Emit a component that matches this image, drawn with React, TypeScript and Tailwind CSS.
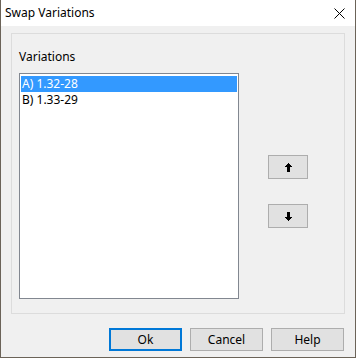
import React from "react";

const font = { fontFamily: '"Noto Sans", "Open Sans", sans-serif' };

function UpArrow() {
  return (
    <svg width="7" height="9" viewBox="0 0 7 9" shapeRendering="crispEdges">
      <path d="M3 0h1v1h1v1h1v1h1v1H5v5H2V4H0V3h1V2h1V1h1z" fill="#000" />
    </svg>
  );
}
function DownArrow() {
  return (
    <svg width="7" height="9" viewBox="0 0 7 9" shapeRendering="crispEdges">
      <path d="M2 0h3v5h2v1H6v1H5v1H4v1H3V8H2V7H1V6H0V5h2z" fill="#000" />
    </svg>
  );
}

export default function App() {
  return (
    <div
      className="w-[356px] h-[358px] flex flex-col bg-[#f0f0f0] border-l border-r border-b border-[#6b6358] text-[12px] text-black"
      style={font}
    >
      <div className="h-[26px] bg-white flex items-center justify-between pl-[4px] pr-[10px] shrink-0">
        <span className="leading-[16px]">Swap Variations</span>
        <svg width="11" height="11" viewBox="0 0 11 11">
          <path d="M0.5 0.5L10.5 10.5M10.5 0.5L0.5 10.5" stroke="#000" strokeWidth="1" />
        </svg>
      </div>
      <div className="flex flex-col pl-[10px] pr-[10px] pt-[7px]">
        <div className="h-[281px] border border-[#dcdcdc] flex flex-col pl-[7px] pt-[15px]">
          <div className="leading-[16px] h-[16px]">Variations</div>
          <div className="flex mt-[8px]">
            <div className="w-[220px] h-[226px] bg-white border border-[#828790] pt-[2px] pl-[1px] pr-[1px]">
              <div className="h-[16px] leading-[16px] bg-[#3399ff] text-white pl-[1px]">A) 1.32-28</div>
              <div className="h-[16px] leading-[16px] pl-[1px]">B) 1.33-29</div>
            </div>
            <div className="ml-[29px] flex flex-col pt-[82px] gap-[25px]">
              <button className="w-[40px] h-[24px] bg-[#e1e1e1] border border-[#adadad] flex items-center justify-center">
                <UpArrow />
              </button>
              <button className="w-[40px] h-[24px] bg-[#e1e1e1] border border-[#adadad] flex items-center justify-center">
                <DownArrow />
              </button>
            </div>
          </div>
        </div>
        <div className="flex justify-end gap-[8px] mt-[14px] pr-[1px]">
          <button className="w-[73px] h-[23px] bg-[#e1e1e1] border-2 border-[#0078d7] leading-[16px]">Ok</button>
          <button className="w-[73px] h-[23px] bg-[#e1e1e1] border border-[#adadad] leading-[16px]">Cancel</button>
          <button className="w-[73px] h-[23px] bg-[#e1e1e1] border border-[#adadad] leading-[16px]">Help</button>
        </div>
      </div>
    </div>
  );
}
